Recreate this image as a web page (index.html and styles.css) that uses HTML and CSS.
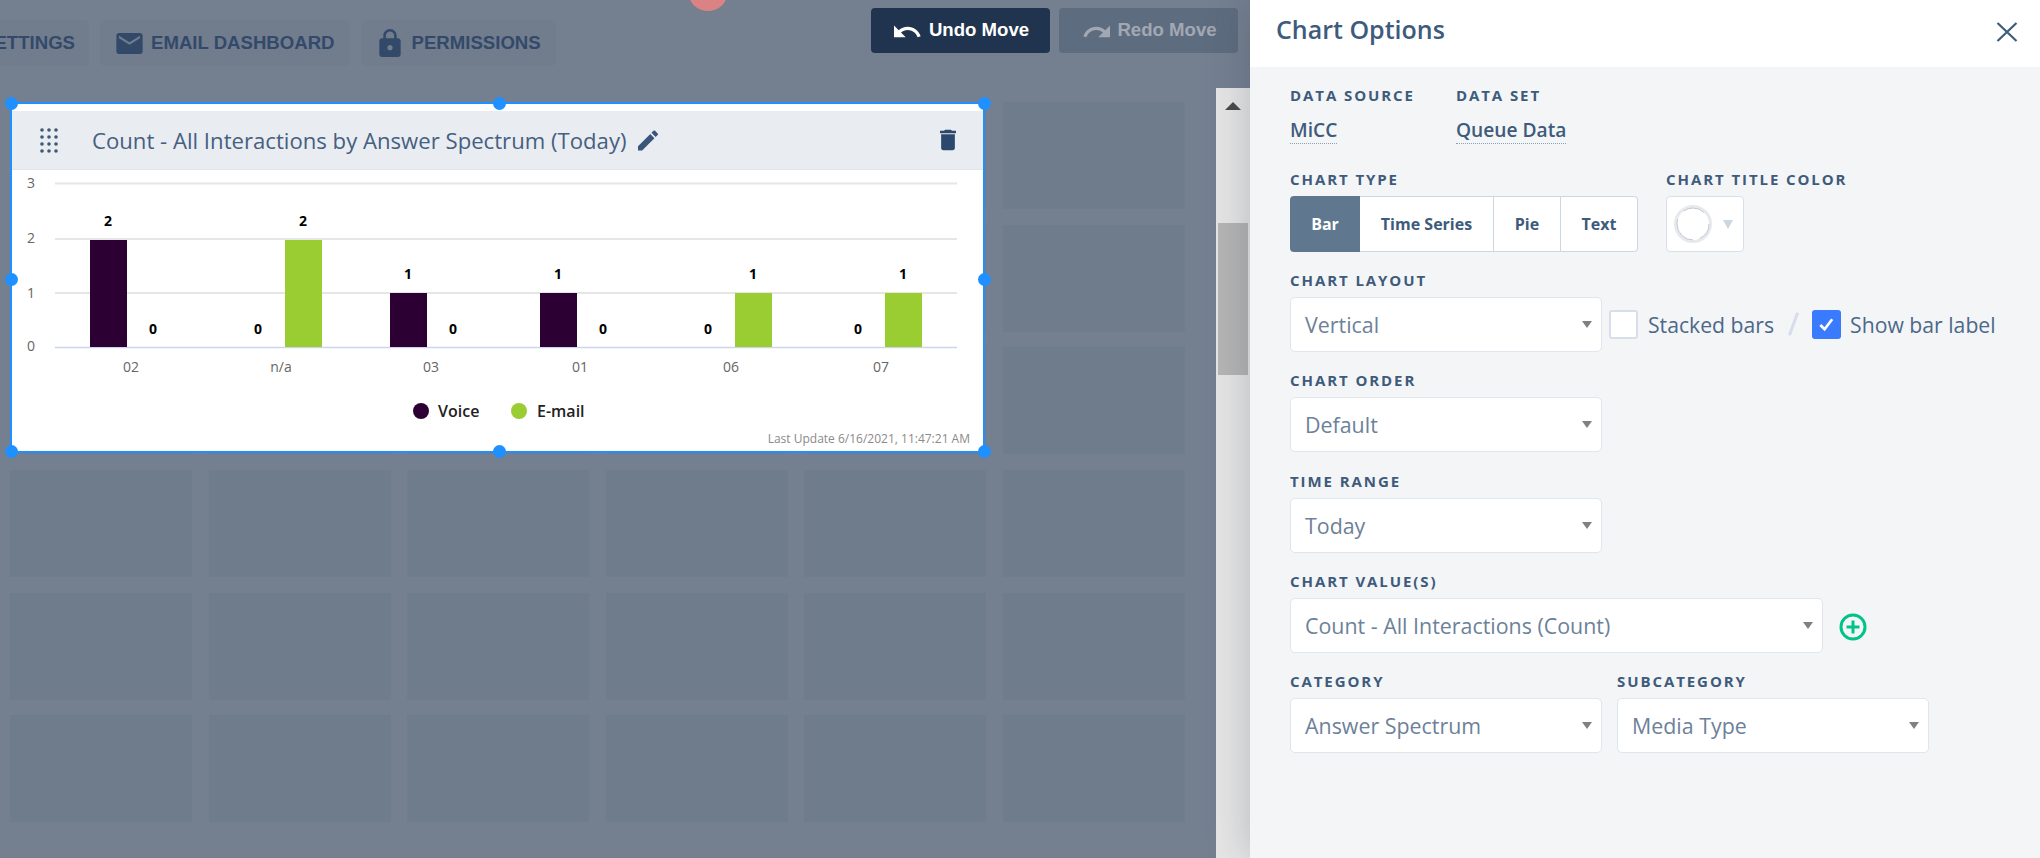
FILE: index.html
```html
<!DOCTYPE html>
<html>
<head>
<title>Chart Options</title>
<meta charset="utf-8"/>
<link rel="stylesheet" href="styles.css">
</head>
<body>
<div class="board">
<div class="dot-red"></div>
<div class="toolbar">
<div class="nav">
<div class="nav-btn nav-cut">SETTINGS</div>
<div class="nav-btn">
<svg class="ic-mail" viewBox="2 4 20 16"><path d="M20 4H4c-1.1 0-2 .9-2 2v12c0 1.1.9 2 2 2h16c1.1 0 2-.9 2-2V6c0-1.1-.9-2-2-2zm0 4l-8 5-8-5V6l8 5 8-5v2z"/></svg>
EMAIL DASHBOARD</div>
<div class="nav-btn">
<svg class="ic-lock" viewBox="4 1 16 21"><path d="M18 8h-1V6c0-2.76-2.24-5-5-5S7 3.24 7 6v2H6c-1.1 0-2 .9-2 2v10c0 1.1.9 2 2 2h12c1.1 0 2-.9 2-2V10c0-1.1-.9-2-2-2zm-6 9c-1.1 0-2-.9-2-2s.9-2 2-2 2 .9 2 2-.9 2-2 2zm3.1-9H8.9V6c0-1.71 1.39-3.1 3.1-3.1 1.71 0 3.1 1.39 3.1 3.1v2z"/></svg>
PERMISSIONS</div>
</div>
<div class="history">
<div class="hist-btn undo">
<svg viewBox="2 7 21.5 9.2"><path d="M12.5 8c-2.65 0-5.05.99-6.9 2.6L2 7v9h9l-3.62-3.62c1.39-1.16 3.16-1.88 5.12-1.88 3.54 0 6.55 2.31 7.6 5.5l2.37-.78C21.08 11.03 17.15 8 12.5 8z"/></svg>
Undo Move</div>
<div class="hist-btn redo">
<svg viewBox="0.5 7 21.5 9.2"><path d="M18.4 10.6C16.55 8.99 14.15 8 11.5 8c-4.65 0-8.58 3.03-9.96 7.22L3.9 16c1.05-3.19 4.05-5.5 7.6-5.5 1.95 0 3.73.72 5.12 1.88L13 16h9V7l-3.6 3.6z"/></svg>
Redo Move</div>
</div>
</div>
<div class="cells">
<i></i><i></i><i></i><i></i><i></i><i></i>
<i></i><i></i><i></i><i></i><i></i><i></i>
<i></i><i></i><i></i><i></i><i></i><i></i>
<i></i><i></i><i></i><i></i><i></i><i></i>
<i></i><i></i><i></i><i></i><i></i><i></i>
<i></i><i></i><i></i><i></i><i></i><i></i>
</div>

<div class="widget">
<span class="handle h-tl"></span><span class="handle h-tc"></span><span class="handle h-tr"></span>
<span class="handle h-ml"></span><span class="handle h-mr"></span>
<span class="handle h-bl"></span><span class="handle h-bc"></span><span class="handle h-br"></span>
<div class="widget-head">
<svg class="grip" viewBox="0 0 18 25">
<g>
<circle cx="2" cy="2" r="1.8"/><circle cx="9" cy="2" r="1.8"/><circle cx="16" cy="2" r="1.8"/>
<circle cx="2" cy="9" r="1.8"/><circle cx="9" cy="9" r="1.8"/><circle cx="16" cy="9" r="1.8"/>
<circle cx="2" cy="16" r="1.8"/><circle cx="9" cy="16" r="1.8"/><circle cx="16" cy="16" r="1.8"/>
<circle cx="2" cy="23" r="1.8"/><circle cx="9" cy="23" r="1.8"/><circle cx="16" cy="23" r="1.8"/>
</g>
</svg>
<div class="widget-title">Count - All Interactions by Answer Spectrum (Today)</div>
<svg class="pencil" viewBox="3 3 18 18"><path d="M3 17.25V21h3.75L17.81 9.94l-3.75-3.75L3 17.25zM20.71 7.04c.39-.39.39-1.02 0-1.41l-2.34-2.34c-.39-.39-1.02-.39-1.41 0l-1.83 1.83 3.75 3.75 1.83-1.83z"/></svg>
<svg class="trash" viewBox="5 3 14 18"><path d="M6 19c0 1.1.9 2 2 2h8c1.1 0 2-.9 2-2V7H6v12zM19 4h-3.5l-1-1h-5l-1 1H5v2h14V4z"/></svg>
</div>
<svg class="chart" viewBox="12 170 971 281" width="971" height="281">
<g class="grid-line">
<line x1="55" x2="957" y1="183.5" y2="183.5"/>
<line x1="55" x2="957" y1="239" y2="239"/>
<line x1="55" x2="957" y1="293" y2="293"/>
</g>
<line class="base-line" x1="55" x2="957" y1="347.5" y2="347.5"/>
<g class="tick">
<text x="31" y="188">3</text>
<text x="31" y="243">2</text>
<text x="31" y="298">1</text>
<text x="31" y="351">0</text>
</g>
<g class="voice">
<rect x="90" y="240" width="37" height="107"/>
<rect x="390" y="293" width="37" height="54"/>
<rect x="540" y="293" width="37" height="54"/>
</g>
<g class="email">
<rect x="285" y="240" width="37" height="107"/>
<rect x="735" y="293" width="37" height="54"/>
<rect x="885" y="293" width="37" height="54"/>
</g>
<g class="bar-label">
<text x="108" y="226">2</text><text x="153" y="334">0</text>
<text x="258" y="334">0</text><text x="303" y="226">2</text>
<text x="408" y="279">1</text><text x="453" y="334">0</text>
<text x="558" y="279">1</text><text x="603" y="334">0</text>
<text x="708" y="334">0</text><text x="753" y="279">1</text>
<text x="858" y="334">0</text><text x="903" y="279">1</text>
</g>
<g class="cat">
<text x="131" y="372">02</text>
<text x="281" y="372">n/a</text>
<text x="431" y="372">03</text>
<text x="580" y="372">01</text>
<text x="731" y="372">06</text>
<text x="881" y="372">07</text>
</g>
<circle class="voice" cx="421" cy="411" r="8"/>
<text class="legend" x="438" y="417">Voice</text>
<circle class="email" cx="519" cy="411" r="8"/>
<text class="legend" x="537" y="417">E-mail</text>
<text class="stamp" x="970" y="443">Last Update 6/16/2021, 11:47:21 AM</text>
</svg>
</div>
</div>

<div class="track">
<div class="track-arrow"></div>
<div class="thumb"></div>
</div>

<div class="panel">
<div class="panel-head">
<div class="panel-title">Chart Options</div>
<svg class="close" viewBox="0 0 24 24"><path d="M2.5 3L21.5 21M21.5 3L2.5 21"/></svg>
</div>
<div class="panel-body">
<div class="row row-source">
<div class="field">
<label>DATA SOURCE</label>
<div class="static">MiCC</div>
</div>
<div class="field">
<label>DATA SET</label>
<div class="static">Queue Data</div>
</div>
</div>
<div class="row row-type">
<div class="field">
<label>CHART TYPE</label>
<div class="btn-group">
<div class="type-btn t-bar active">Bar</div>
<div class="type-btn t-time">Time Series</div>
<div class="type-btn t-pie">Pie</div>
<div class="type-btn t-text">Text</div>
</div>
</div>
<div class="field">
<label>CHART TITLE COLOR</label>
<div class="picker">
<svg class="swatch" viewBox="0 0 38 38">
<circle class="swatch-ring" cx="19" cy="19" r="17.5"/>
<circle class="swatch-arc" cx="19" cy="19" r="16" stroke-dasharray="18 7 30 10 22 14"/>
</svg>
<div class="picker-caret"></div>
</div>
</div>
</div>
<div class="row">
<div class="field">
<label>CHART LAYOUT</label>
<div class="layout-line">
<div class="select">Vertical</div>
<div class="check"></div>
<span class="check-text">Stacked bars</span>
<span class="slash"></span>
<div class="check checked">
<svg viewBox="0 0 20 20"><path d="M3.5 10.5L8 15L16 4.5"/></svg>
</div>
<span class="check-text">Show bar label</span>
</div>
</div>
</div>
<div class="row">
<div class="field">
<label>CHART ORDER</label>
<div class="select">Default</div>
</div>
</div>
<div class="row">
<div class="field">
<label>TIME RANGE</label>
<div class="select">Today</div>
</div>
</div>
<div class="row">
<div class="field">
<label>CHART VALUE(S)</label>
<div class="value-line">
<div class="select select-wide">Count - All Interactions (Count)</div>
<svg class="plus" viewBox="0 0 28 28"><circle cx="14" cy="14" r="12"/><path d="M14 7.5V20.5M7.5 14H20.5"/></svg>
</div>
</div>
</div>
<div class="row">
<div class="field">
<label>CATEGORY</label>
<div class="select">Answer Spectrum</div>
</div>
<div class="field">
<label>SUBCATEGORY</label>
<div class="select">Media Type</div>
</div>
</div>
</div>
</div>
</body></html>
```
FILE: styles.css
```css
* {
box-sizing: border-box;
}
html, body {
height: 100%;
}
body {
margin: 0;
display: flex;
overflow: hidden;
background-color: #747f90;
font-family: 'Open Sans', sans-serif;
color: #3e5b7b;
}
.board {
position: relative;
width: 1216px;
height: 858px;
flex: none;
}
.dot-red {
position: absolute;
left: 688px;
top: -29px;
width: 40px;
height: 40px;
border-radius: 50%;
background-color: #db8384;
}
.toolbar {
height: 102px;
display: flex;
justify-content: space-between;
font-family: 'Liberation Sans', Arial, sans-serif;
font-weight: bold;
}
.nav {
display: flex;
gap: 11px;
padding-top: 20px;
margin-left: -20px;
}
.nav-btn {
height: 46px;
padding: 0 15px;
display: flex;
align-items: center;
gap: 8px;
border-radius: 6px;
background-color: #717c8d;
color: #33496a;
font-size: 18.6px;
}
.nav-cut {
width: 109px;
padding: 0 14px 0 0;
justify-content: flex-end;
overflow: hidden;
}
.ic-mail {
width: 27px;
height: 21px;
fill: #33496a;
margin-left: 1px;
}
.ic-lock {
width: 22px;
height: 28px;
fill: #33496a;
margin: 0 3px;
}
.history {
display: flex;
gap: 9px;
position: absolute;
left: 871px;
top: 8px;
}
.hist-btn {
height: 45px;
width: 179px;
padding-bottom: 2px;
padding-left: 2px;
display: flex;
align-items: center;
justify-content: center;
gap: 7px;
border-radius: 4px;
font-size: 18.6px;
}
.hist-btn svg {
width: 28px;
height: 13px;
margin-top: 4px;
}
.undo {
background-color: #20344f;
color: #fff;
}
.undo svg {
fill: #fff;
}
.redo {
background-color: #5e6c7f;
color: #a1a8b3;
}
.redo svg {
fill: #a1a8b3;
}
.cells {
display: grid;
grid-template-columns: repeat(6, 182px);
grid-auto-rows: 107px;
column-gap: 16.5px;
row-gap: 15.67px;
padding-left: 10px;
}
.cells i {
background-color: #6f7c8c;
}
.widget {
position: absolute;
left: 10px;
top: 102px;
width: 975px;
height: 351px;
border: 2px solid #1e90ff;
padding-top: 7px;
background-color: #fff;
}
.handle {
position: absolute;
width: 13px;
height: 13px;
border-radius: 50%;
background-color: #1e90ff;
z-index: 2;
}
.h-tl, .h-ml, .h-bl {
left: -7px;
}
.h-tc, .h-bc {
left: 481px;
}
.h-tr, .h-mr, .h-br {
right: -8px;
}
.h-tl, .h-tc, .h-tr {
top: -7px;
}
.h-ml, .h-mr {
top: 169px;
}
.h-bl, .h-bc, .h-br {
bottom: -7px;
}
.widget-head {
height: 59px;
display: flex;
align-items: center;
background-color: #e9edf1;
border-bottom: 1px solid #e1e5ea;
padding: 0 27px 0 28px;
}
.grip {
width: 18px;
height: 25px;
fill: #3e5878;
flex: none;
}
.widget-title {
margin-left: 34px;
font-size: 22.15px;
color: #465f80;
line-height: 59px;
}
.pencil {
width: 20px;
height: 21px;
fill: #39567a;
margin-left: 11px;
}
.trash {
width: 16px;
height: 22px;
fill: #2c486c;
margin-left: auto;
}
.chart {
display: block;
}
.grid-line line {
stroke: #e6e6e6;
stroke-width: 2;
}
.base-line {
stroke: #ccd6eb;
stroke-width: 1.5;
}
.tick text {
font-size: 14px;
fill: #666;
text-anchor: middle;
}
.voice {
fill: #2d0033;
}
.email {
fill: #9acd32;
}
.bar-label text {
font-size: 14px;
font-weight: bold;
fill: #000;
text-anchor: middle;
}
.cat text {
font-size: 14px;
fill: #666;
text-anchor: middle;
}
.legend {
font-size: 16px;
font-weight: 600;
fill: #222;
}
.stamp {
font-size: 12px;
fill: #8a8a8a;
text-anchor: end;
}
.track {
width: 34px;
height: 770px;
margin-top: 88px;
flex: none;
padding: 0 2px;
background-color: #e6e6e6;
position: relative;
}
.track-arrow {
position: absolute;
left: 9px;
top: 14px;
width: 0;
height: 0;
border-left: 8px solid transparent;
border-right: 8px solid transparent;
border-bottom: 8px solid #4a4a4a;
}
.thumb {
margin-top: 135px;
height: 152px;
background-color: #b5b5b5;
}
.panel {
width: 790px;
flex: none;
background-color: #f4f5f7;
box-shadow: 0 0 40px rgba(50, 60, 80, 0.28);
position: relative;
z-index: 3;
}
.panel-head {
height: 67px;
background-color: #fff;
display: flex;
align-items: center;
justify-content: space-between;
padding: 0 21px 10px 26px;
}
.panel-title {
font-size: 25px;
font-weight: 600;
color: #3e5b7b;
}
.close {
width: 24px;
height: 24px;
margin-top: 6px;
fill: none;
stroke: #3e5b7b;
stroke-width: 2.2;
}
.panel-body {
padding: 20px 0 0 40px;
}
.row {
display: flex;
gap: 28px;
margin-bottom: 20.4px;
}
.row-type {
margin-bottom: 19.9px;
}
.row-source {
height: 84px;
gap: 41px;
margin-bottom: 0;
}
.row:last-child {
gap: 15px;
}
label {
display: block;
height: 18px;
line-height: 16.5px;
margin-bottom: 7px;
font-size: 15px;
font-weight: 700;
letter-spacing: 1.92px;
color: #3e5b7b;
white-space: nowrap;
}
.row-source label {
margin-bottom: 12px;
}
.static {
display: inline-block;
height: 27px;
line-height: 26px;
font-size: 19.2px;
font-weight: 600;
color: #3e5b7b;
border-bottom: 1px dotted #8ba0b8;
}
.btn-group {
display: flex;
height: 56px;
}
.type-btn {
display: flex;
align-items: center;
justify-content: center;
background-color: #fff;
border: 1px solid #cbd7e3;
border-left: 0;
font-size: 16px;
font-weight: 700;
color: #3e5b7b;
}
.t-bar {
width: 70px;
border: 0;
border-radius: 4px 0 0 4px;
}
.type-btn.active {
background-color: #5f7890;
color: #fff;
}
.t-time {
width: 134px;
}
.t-pie {
width: 67px;
}
.t-text {
width: 77px;
border-radius: 0 4px 4px 0;
}
.picker {
width: 78px;
height: 56px;
display: flex;
align-items: center;
background-color: #fff;
border: 1px solid #d7e0ea;
border-radius: 4px;
padding-left: 7px;
}
.swatch {
width: 38px;
height: 38px;
flex: none;
fill: none;
}
.swatch-ring {
stroke: #e6eaef;
stroke-width: 3;
}
.swatch-arc {
stroke: #c4c8cc;
stroke-width: 1;
}
.picker-caret {
margin-left: 11px;
width: 0;
height: 0;
border-left: 5px solid transparent;
border-right: 5px solid transparent;
border-top: 9px solid #ccd6e3;
}
.select {
position: relative;
width: 312px;
height: 55px;
line-height: 53px;
padding-left: 14px;
background-color: #fff;
border: 1px solid #e0e6ee;
border-radius: 5px;
font-size: 21.4px;
color: #6d8199;
}
.select::after {
content: '';
position: absolute;
right: 9px;
top: 23px;
border-left: 5.5px solid transparent;
border-right: 5.5px solid transparent;
border-top: 7px solid #808080;
}
.select-wide {
width: 533px;
}
.layout-line, .value-line {
display: flex;
align-items: center;
}
.check {
width: 29px;
height: 29px;
margin-left: 7px;
background-color: #fff;
border: 2px solid #d5dee9;
border-radius: 3px;
flex: none;
}
.check.checked {
margin-left: 0;
border: 0;
background-color: #3a7bfd;
padding: 5px;
}
.check svg {
display: block;
fill: none;
stroke: #fff;
stroke-width: 2.8;
}
.check-text {
margin-left: 10px;
font-size: 21.2px;
color: #4d6889;
white-space: nowrap;
}
.checked + .check-text {
margin-left: 9px;
}
.slash {
width: 3px;
height: 24px;
margin: 0 17px 0 18px;
background-color: #d5dee9;
transform: rotate(20deg);
flex: none;
}
.plus {
width: 28px;
height: 28px;
margin-left: 16px;
margin-top: 3px;
fill: none;
stroke: #00c389;
stroke-width: 3;
}
```
